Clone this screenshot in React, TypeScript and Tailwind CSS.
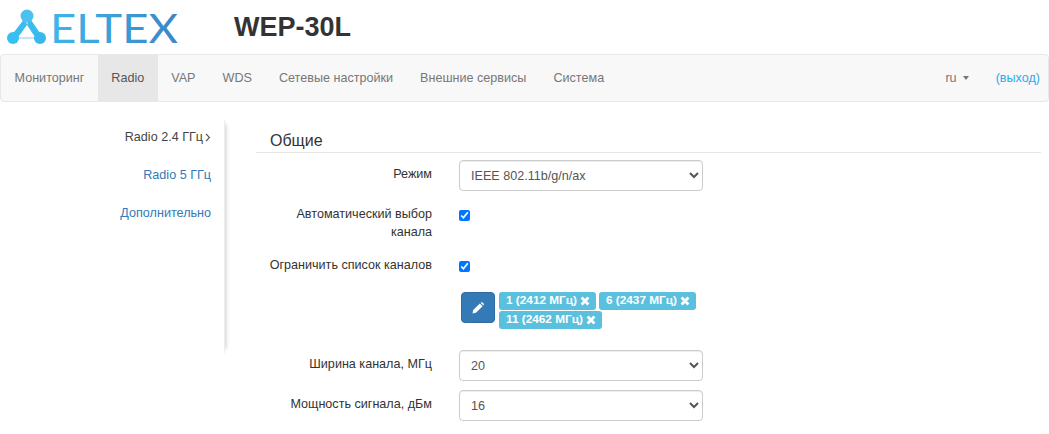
import React from "react";

function Logo() {
  return (
    <svg width="190" height="52" viewBox="0 0 190 52" className="block">
      <defs>
        <linearGradient id="g" gradientUnits="userSpaceOnUse" x1="50" x2="178" y1="0" y2="0">
          <stop offset="0" stopColor="#3fb6e8" />
          <stop offset="1" stopColor="#3a86c8" />
        </linearGradient>
      </defs>
      <path d="M15 37 L38 37" stroke="#a8e0f7" strokeWidth="1.5" />
      <path d="M25 17 L11 35 L16 39 L27 24 Z M27 24 L37 39 L42 35 L29 16 Z" fill="#3bbcee" />
      <circle cx="27" cy="15" r="6.5" fill="#4cc0ee" />
      <circle cx="13" cy="37" r="6" fill="#38bff2" />
      <circle cx="40" cy="37" r="6" fill="#38b8ec" />
      <text x="50" y="42" fontFamily="Lato, sans-serif" fontWeight="400" fontSize="40" fill="url(#g)" textLength="128" lengthAdjust="spacingAndGlyphs">ELTEX</text>
    </svg>
  );
}

function Row({ label, children, className = "" }: { label: React.ReactNode; children: React.ReactNode; className?: string }) {
  return (
    <div className={`flex ${className}`}>
      <div className="w-[176px] text-right text-[#333] leading-[18px] pt-[5px] shrink-0">{label}</div>
      <div className="ml-[27px] w-[244px]">{children}</div>
    </div>
  );
}

function Sel({ value }: { value: string }) {
  return (
    <select defaultValue={value} className="block w-[244px] h-[31px] border border-[#ccc] rounded-[4px] bg-white px-[7px] text-[#555] text-[12.6px] shadow-[inset_0_1px_1px_rgba(0,0,0,0.075)]">
      <option>{value}</option>
    </select>
  );
}

function Tag({ text }: { text: string }) {
  return (
    <span className="inline-flex items-center h-[18px] rounded-[3px] bg-[#5bc0de] text-white font-bold text-[11.8px] pl-[7px] pr-[6px] gap-[3px] whitespace-nowrap">
      {text}
      <svg width="10" height="10" viewBox="0 0 10 10"><path d="M1.6 1.6 L8.4 8.4 M8.4 1.6 L1.6 8.4" stroke="#fff" strokeWidth="2.8" /></svg>
    </span>
  );
}

export default function App() {
  const nav = ["Мониторинг", "Radio", "VAP", "WDS", "Сетевые настройки", "Внешние сервисы", "Система"];
  return (
    <div className="w-[1049px] h-[434px] overflow-hidden bg-white text-[12.6px] text-[#333] font-['Liberation_Sans',sans-serif]">
      <div className="flex items-center h-[54px]">
        <Logo />
        <h1 className="ml-[44px] text-[27px] leading-[54px] font-bold text-[#333]">WEP-30L</h1>
      </div>
      <nav className="flex items-stretch h-[48px] border border-[#e7e7e7] rounded-[4px] bg-[#f8f8f8] text-[#777]">
        {nav.map((n) => (
          <div key={n} className={`flex items-center px-[13.5px] ${n === "Radio" ? "bg-[#e7e7e7] text-[#555]" : ""}`}>{n}</div>
        ))}
        <div className="ml-auto flex items-center gap-[5px] pr-[27px]">ru <span className="border-x-[3.5px] border-x-transparent border-t-[4px] border-t-[#777] ml-[1px]" /></div>
        <div className="flex items-center pr-[8px] text-[#31a9ea]">(выход)</div>
      </nav>
      <div className="flex mt-[18px]">
        <aside className="w-[225px] h-[233px] shrink-0 border-r border-[#eee] shadow-[5px_0_4px_-4px_rgba(0,0,0,0.2)] text-right pr-[13px] pt-[9px] flex flex-col gap-[21px] leading-[17px]">
          <div className="flex justify-end items-center text-[#444]">
            Radio 2.4 ГГц
            <svg width="6" height="9" viewBox="0 0 6 9" className="ml-[2px]"><path d="M1 1 L4.5 4.5 L1 8" fill="none" stroke="#555" strokeWidth="1.1" /></svg>
          </div>
          <div className="text-[#337ab7]">Radio 5 ГГц</div>
          <div className="text-[#337ab7]">Дополнительно</div>
        </aside>
        <main className="ml-[31px] w-[785px] pt-[1px]">
          <h2 className="text-[16px] leading-[20px] pl-[14px] pt-[10px] pb-[1px] border-b border-[#e5e5e5] text-[#333]">Общие</h2>
          <div className="mt-[7px] flex flex-col">
            <Row label="Режим"><Sel value="IEEE 802.11b/g/n/ax" /></Row>
            <Row label={<>Автоматический выбор<br />канала</>} className="mt-[9px] h-[44px]">
              <input type="checkbox" defaultChecked className="block mt-[10px] w-[11px] h-[11px] accent-[#0075ff]" />
            </Row>
            <Row label="Ограничить список каналов" className="mt-[7px] h-[32px]">
              <input type="checkbox" defaultChecked className="block mt-[10px] w-[11px] h-[11px] accent-[#0075ff]" />
            </Row>
            <div className="flex mt-[9px] ml-[205px]">
              <button className="w-[34px] h-[31px] rounded-[4px] bg-[#337ab7] border border-[#2e6da4] flex items-center justify-center">
                <svg width="12" height="12" viewBox="0 0 12 12"><path d="M0.5 11.5 L1.2 8 L7.8 1.4 L10.6 4.2 L4 10.8 Z M8.6 0.7 L9.4 0.2 Q10 0 10.4 0.4 L11.6 1.6 Q12 2 11.8 2.6 L11.3 3.4 Z" fill="#fff" /></svg>
              </button>
              <div className="ml-[4px] w-[205px] flex flex-wrap gap-x-[3px] gap-y-[1px] content-start">
                <Tag text="1 (2412 МГц)" />
                <Tag text="6 (2437 МГц)" />
                <Tag text="11 (2462 МГц)" />
              </div>
            </div>
            <Row label="Ширина канала, МГц" className="mt-[21px]"><Sel value="20" /></Row>
            <Row label="Мощность сигнала, дБм" className="mt-[9px]"><Sel value="16" /></Row>
          </div>
        </main>
      </div>
    </div>
  );
}
